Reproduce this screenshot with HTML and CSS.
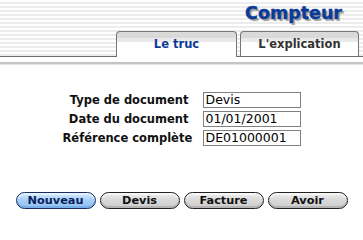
FILE: index.html
```html
<!DOCTYPE html>
<html lang="fr">
<head>
<meta charset="utf-8">
<title>Compteur</title>
<link rel="stylesheet" href="styles.css">
</head>
<body>
<div class="top">
  <div class="title-row"><h1 class="title">Compteur</h1></div>
  <div class="tabs">
    <div class="tab tab-a active">Le truc</div>
    <div class="tab tab-b">L'explication</div>
  </div>
</div>
<div class="rule"></div>
<div class="form">
  <label class="label">Type de document</label>
  <div class="field">Devis</div>
  <label class="label">Date du document</label>
  <div class="field">01/01/2001</div>
  <label class="label">Référence complète</label>
  <div class="field">DE01000001</div>
</div>
<div class="buttons">
  <button class="btn primary">Nouveau</button>
  <button class="btn">Devis</button>
  <button class="btn">Facture</button>
  <button class="btn">Avoir</button>
</div>
</body>
</html>
```
FILE: styles.css
```css
html, body {
  margin: 0;
  padding: 0;
  background: #fff;
}
body {
  width: 363px;
  height: 230px;
  overflow: hidden;
  font-family: "DejaVu Sans", Verdana, sans-serif;
}
.top {
  background: repeating-linear-gradient(to bottom, #ffffff 0 2px, #ececec 2px 4px);
  border-bottom: 1px solid #6e6e6e;
}
.title-row {
  height: 31px;
  box-sizing: border-box;
  padding: 2px 21px 0 0;
  display: flex;
  justify-content: flex-end;
}
.title {
  margin: 0;
  font: bold 17.5px/22px "DejaVu Sans", sans-serif;
  color: #0b3a99;
  text-shadow: 2px 2px 1px #9a9a9a;
  -webkit-text-stroke: 0.4px #0b3a99;
}
.tabs {
  display: flex;
  justify-content: flex-end;
  gap: 3px;
  padding-right: 4px;
}
.tab {
  box-sizing: border-box;
  border: 1px solid #777;
  border-bottom: none;
  border-radius: 4px 4px 0 0;
  padding: 5px 0 5px;
  font: bold 11.5px/14px "DejaVu Sans", sans-serif;
  text-align: center;
  color: #333;
  background: linear-gradient(#dadada 0 6px, #e9e9e9 6px 10px, #ffffff 10px);
}
.tab-a { width: 121px; }
.tab-b { width: 119px; }
.tab.active {
  margin-bottom: -1px;
  padding-bottom: 6px;
  color: #0b3a99;
}
.rule {
  height: 3px;
  margin-top: 5px;
  background: linear-gradient(#c4c4c4 0 2px, #e2e2e2 2px);
}
.form {
  display: grid;
  grid-template-columns: 126px 98px;
  column-gap: 14px;
  row-gap: 3px;
  justify-content: center;
  margin-top: 27px;
}
.label {
  font: bold 11.5px/16px "DejaVu Sans", sans-serif;
  text-align: right;
  white-space: nowrap;
  color: #111;
}
.field {
  height: 16px;
  box-sizing: border-box;
  border: 1px solid #808080;
  padding: 0 2px;
  font: 12.5px/14px "DejaVu Sans", sans-serif;
  color: #000;
  white-space: nowrap;
}
.buttons {
  display: flex;
  justify-content: center;
  gap: 4px;
  margin-top: 46px;
}
.btn {
  width: 80px;
  height: 17px;
  box-sizing: border-box;
  margin: 0;
  padding: 0;
  border: 1px solid #222;
  border-radius: 9px;
  background: linear-gradient(#eeeeee 0, #dadada 45%, #cccccc 100%);
  box-shadow: inset 0 -2px 0 #b4b4b4, inset 0 2px 0 #f6f6f6;
  font: bold 11.3px/15px "DejaVu Sans", sans-serif;
  color: #111;
}
.btn.primary {
  border-color: #1c2c60;
  background: linear-gradient(#d8ecff 0, #a8d0f8 45%, #90c0f0 100%);
  box-shadow: inset 0 -2px 0 #7aaee6, inset 0 2px 0 #e4f2ff;
  color: #0c1f5a;
}
```
